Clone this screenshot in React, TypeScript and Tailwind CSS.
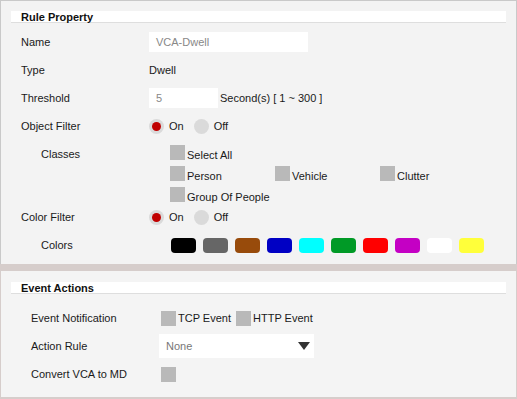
const FONT = "font-['Liberation_Sans',Arial,sans-serif]";

const SWATCHES = [
  "bg-[#000000]",
  "bg-[#666666]",
  "bg-[#984b0b]",
  "bg-[#0000c4]",
  "bg-[#00ffff]",
  "bg-[#009a26]",
  "bg-[#ff0000]",
  "bg-[#c400c4]",
  "bg-[#ffffff]",
  "bg-[#ffff3a]",
];

function Box() {
  return <span className="block w-[15px] h-[15px] bg-[#b9b9b9] shrink-0" />;
}

function Check({ label }: { label: string }) {
  return (
    <div className="flex items-end h-[15px]">
      <Box />
      <span className="ml-[2px] leading-[12px] mb-[-1px]">{label}</span>
    </div>
  );
}

function Radio({ on, label }: { on?: boolean; label: string }) {
  return (
    <div className="flex items-center">
      <span className="w-[15px] h-[15px] rounded-full bg-[#dadada] flex items-center justify-center">
        {on && <span className="w-[9px] h-[9px] rounded-full bg-[#c00000]" />}
      </span>
      <span className="ml-[5px]">{label}</span>
    </div>
  );
}

function Header({ title }: { title: string }) {
  return (
    <div className="mx-[10px] h-[12px] bg-white border-b border-[#dedede] pl-[10px] font-bold leading-[12px] text-[#111]">
      {title}
    </div>
  );
}

function Row({
  label,
  indent,
  labelW = "w-[128px]",
  children,
}: {
  label: string;
  indent?: boolean;
  labelW?: string;
  children?: React.ReactNode;
}) {
  return (
    <div className="flex items-center h-[28px]">
      <div className={`${labelW} shrink-0 ${indent ? "pl-[20px]" : ""}`}>{label}</div>
      {children}
    </div>
  );
}

export default function App() {
  return (
    <div className={`w-[517px] h-[399px] bg-[#f4f4f4] text-[11px] text-[#1a1a1a] flex flex-col ${FONT}`}>
      {/* Rule Property */}
      <div className="h-[264px] border-t border-x border-[#c9c9c9] pt-[10px] bg-[#f3f3f3]">
        <Header title="Rule Property" />
        <div className="pl-[20px] mt-[5px]">
          <Row label="Name">
            <div className="w-[159px] h-[20px] bg-white pl-[7px] flex items-center text-[#888]">VCA-Dwell</div>
          </Row>
          <Row label="Type">
            <span>Dwell</span>
          </Row>
          <Row label="Threshold">
            <div className="w-[69px] h-[20px] bg-white pl-[7px] flex items-center text-[#888]">5</div>
            <span className="ml-[2px]">Second(s) [ 1 ~ 300 ]</span>
          </Row>
          <Row label="Object Filter">
            <Radio on label="On" />
            <div className="ml-[10px]">
              <Radio label="Off" />
            </div>
          </Row>
          <div className="flex h-[63px]">
            <div className="w-[149px] shrink-0 pl-[20px] h-[28px] flex items-center">Classes</div>
            <div className="pt-[5px] flex flex-col gap-[6px]">
              <Check label="Select All" />
              <div className="grid grid-cols-[105px_105px_105px]">
                <Check label="Person" />
                <Check label="Vehicle" />
                <Check label="Clutter" />
              </div>
              <Check label="Group Of People" />
            </div>
          </div>
          <Row label="Color Filter">
            <Radio on label="On" />
            <div className="ml-[10px]">
              <Radio label="Off" />
            </div>
          </Row>
          <Row label="Colors" indent labelW="w-[150px]">
            <div className="flex gap-[7px]">
              {SWATCHES.map((c) => (
                <span key={c} className={`w-[25px] h-[15px] rounded-[4px] ${c}`} />
              ))}
            </div>
          </Row>
        </div>
      </div>

      <div className="h-[7px] bg-[#d6cdcb]" />

      {/* Event Actions */}
      <div className="flex-1 border-x border-b-2 border-[#d6cdcb] pt-[11px]">
        <Header title="Event Actions" />
        <div className="pl-[30px] mt-[10px]">
          <Row label="Event Notification">
            <div className="flex items-center ml-[2px]">
              <Box />
              <span className="ml-[2px]">TCP Event</span>
              <span className="ml-[5px]">
                <Box />
              </span>
              <span className="ml-[2px]">HTTP Event</span>
            </div>
          </Row>
          <Row label="Action Rule">
            <div className="w-[155px] h-[24px] bg-white pl-[7px] pr-[4px] flex items-center justify-between text-[#777]">
              <span>None</span>
              <svg width="12" height="8" viewBox="0 0 12 8">
                <path d="M0 0 H12 L6 8 Z" fill="#333" />
              </svg>
            </div>
          </Row>
          <Row label="Convert VCA to MD">
            <span className="ml-[2px] flex">
              <Box />
            </span>
          </Row>
        </div>
      </div>
    </div>
  );
}
